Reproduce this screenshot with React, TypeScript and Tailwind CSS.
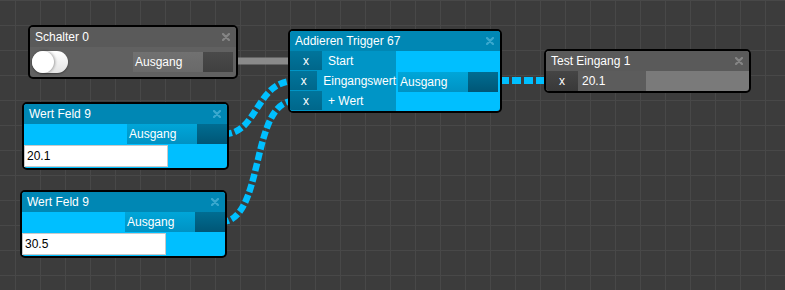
import React from "react";

type Tone = "blue" | "grey";

const CloseIcon = ({ tone }: { tone: Tone }) => (
  <svg width="8" height="8" viewBox="0 0 8 8" className="shrink-0">
    <path
      d="M1 1 L7 7 M7 1 L1 7"
      strokeWidth="2.2"
      strokeLinecap="round"
      className={tone === "blue" ? "stroke-[#3aa9cf]" : "stroke-[#858585]"}
    />
  </svg>
);

const NodeTitle = ({ title, tone }: { title: string; tone: Tone }) => (
  <div
    className={`flex h-[20px] items-center justify-between pl-[5px] pr-[6px] text-[12px] text-white ${
      tone === "blue" ? "bg-[#0087b4]" : "bg-[#5a5a5a]"
    }`}
  >
    <span>{title}</span>
    <CloseIcon tone={tone} />
  </div>
);

const Output = ({ tone, label = "Ausgang" }: { tone: Tone; label?: string }) => (
  <div className="flex h-[20px] w-[100px]">
    <div
      className={`flex flex-1 items-center pl-[2px] text-[12px] text-white ${
        tone === "blue"
          ? "bg-[linear-gradient(to_bottom,#00a6d9,#0092c3)]"
          : "bg-[linear-gradient(to_bottom,#717171,#696969)]"
      }`}
    >
      {label}
    </div>
    <div
      className={`w-[30px] ${
        tone === "blue"
          ? "bg-[linear-gradient(to_bottom,#006d92,#005676)]"
          : "bg-[linear-gradient(to_bottom,#4a4a4a,#404040)]"
      }`}
    />
  </div>
);

const XCell = ({ dark }: { dark?: boolean }) => (
  <div
    className={`flex h-full w-[32px] items-center justify-center text-[12px] text-white ${
      dark
        ? "bg-[linear-gradient(to_bottom,#454545,#393939)]"
        : "bg-[linear-gradient(to_bottom,#00759c,#00678b)]"
    }`}
  >
    x
  </div>
);

const Connections = () => (
  <svg width="785" height="290" className="absolute left-0 top-0">
    <path d="M234 61 L292 61" stroke="#8a8a8a" strokeWidth="7" fill="none" />
    <path
      d="M500 80.5 L548 80.5"
      stroke="#00bfff"
      strokeWidth="7"
      strokeDasharray="9 3"
      fill="none"
    />
    <path
      d="M224 134 C 258 134, 256 81, 294 81"
      stroke="#00bfff"
      strokeWidth="6.5"
      strokeDasharray="8 3"
      fill="none"
    />
    <path
      d="M221 222 C 265 222, 250 101, 294 101"
      stroke="#00bfff"
      strokeWidth="6.5"
      strokeDasharray="8 3"
      fill="none"
    />
  </svg>
);

const WertFeld = ({ value, pos }: { value: string; pos: string }) => (
  <div
    className={`absolute ${pos} w-[207px] overflow-hidden rounded-[5px] border-2 border-black bg-[#00bfff]`}
  >
    <NodeTitle title="Wert Feld 9" tone="blue" />
    <div className="flex h-[21px] items-start justify-end">
      <Output tone="blue" />
    </div>
    <div className="h-[23px]">
      <div className="flex h-[22px] w-[144px] items-center border border-[#c9c9c9] bg-white pl-[2px] text-[12px] text-black">
        {value}
      </div>
    </div>
  </div>
);

const App = () => {
  return (
    <div className="relative h-[290px] w-[785px] overflow-hidden bg-[#3c3c3c] bg-[linear-gradient(to_right,#484848_1px,transparent_1px),linear-gradient(to_bottom,#484848_1px,transparent_1px)] bg-[size:25px_25px] bg-[position:15px_0px] font-['Liberation_Sans',Arial,sans-serif]">
      <Connections />

      {/* Schalter 0 */}
      <div className="absolute left-[28px] top-[25px] w-[210px] overflow-hidden rounded-[5px] border-2 border-black bg-[#616161]">
        <NodeTitle title="Schalter 0" tone="grey" />
        <div className="flex h-[30px] items-center justify-between pl-[2px] pr-[3px]">
          <div className="relative h-[22px] w-[36px] rounded-full bg-[linear-gradient(to_bottom,#ffffff,#e4e4e4)] shadow-[0_1px_2px_rgba(0,0,0,0.4)]">
            <div className="absolute left-0 top-0 h-[22px] w-[22px] rounded-full bg-white shadow-[1px_0_3px_rgba(0,0,0,0.35)]" />
          </div>
          <Output tone="grey" />
        </div>
      </div>

      {/* Addieren Trigger 67 */}
      <div className="absolute left-[288px] top-[29px] w-[214px] overflow-hidden rounded-[5px] border-2 border-black bg-[#00bfff]">
        <NodeTitle title="Addieren Trigger 67" tone="blue" />
        <div className="flex h-[60px]">
          <div className="flex w-[106px] flex-col gap-px bg-[#0095c6]">
            {["Start", "Eingangswert", "+ Wert"].map((label) => (
              <div key={label} className="flex h-[19px] items-center">
                <XCell />
                <span className="pl-[6px] text-[12px] text-white">{label}</span>
              </div>
            ))}
          </div>
          <div className="pl-[2px] pt-[21px]">
            <Output tone="blue" />
          </div>
        </div>
      </div>

      {/* Test Eingang 1 */}
      <div className="absolute left-[544px] top-[49px] w-[207px] overflow-hidden rounded-[5px] border-2 border-black bg-[#7a7a7a]">
        <NodeTitle title="Test Eingang 1" tone="grey" />
        <div className="flex h-[20px]">
          <XCell dark />
          <div className="flex w-[68px] items-center bg-[#5c5c5c] pl-[4px] text-[12px] text-white">
            20.1
          </div>
        </div>
      </div>

      <WertFeld value="20.1" pos="left-[22px] top-[102px]" />
      <WertFeld value="30.5" pos="left-[20px] top-[190px]" />
    </div>
  );
};

export default App;
